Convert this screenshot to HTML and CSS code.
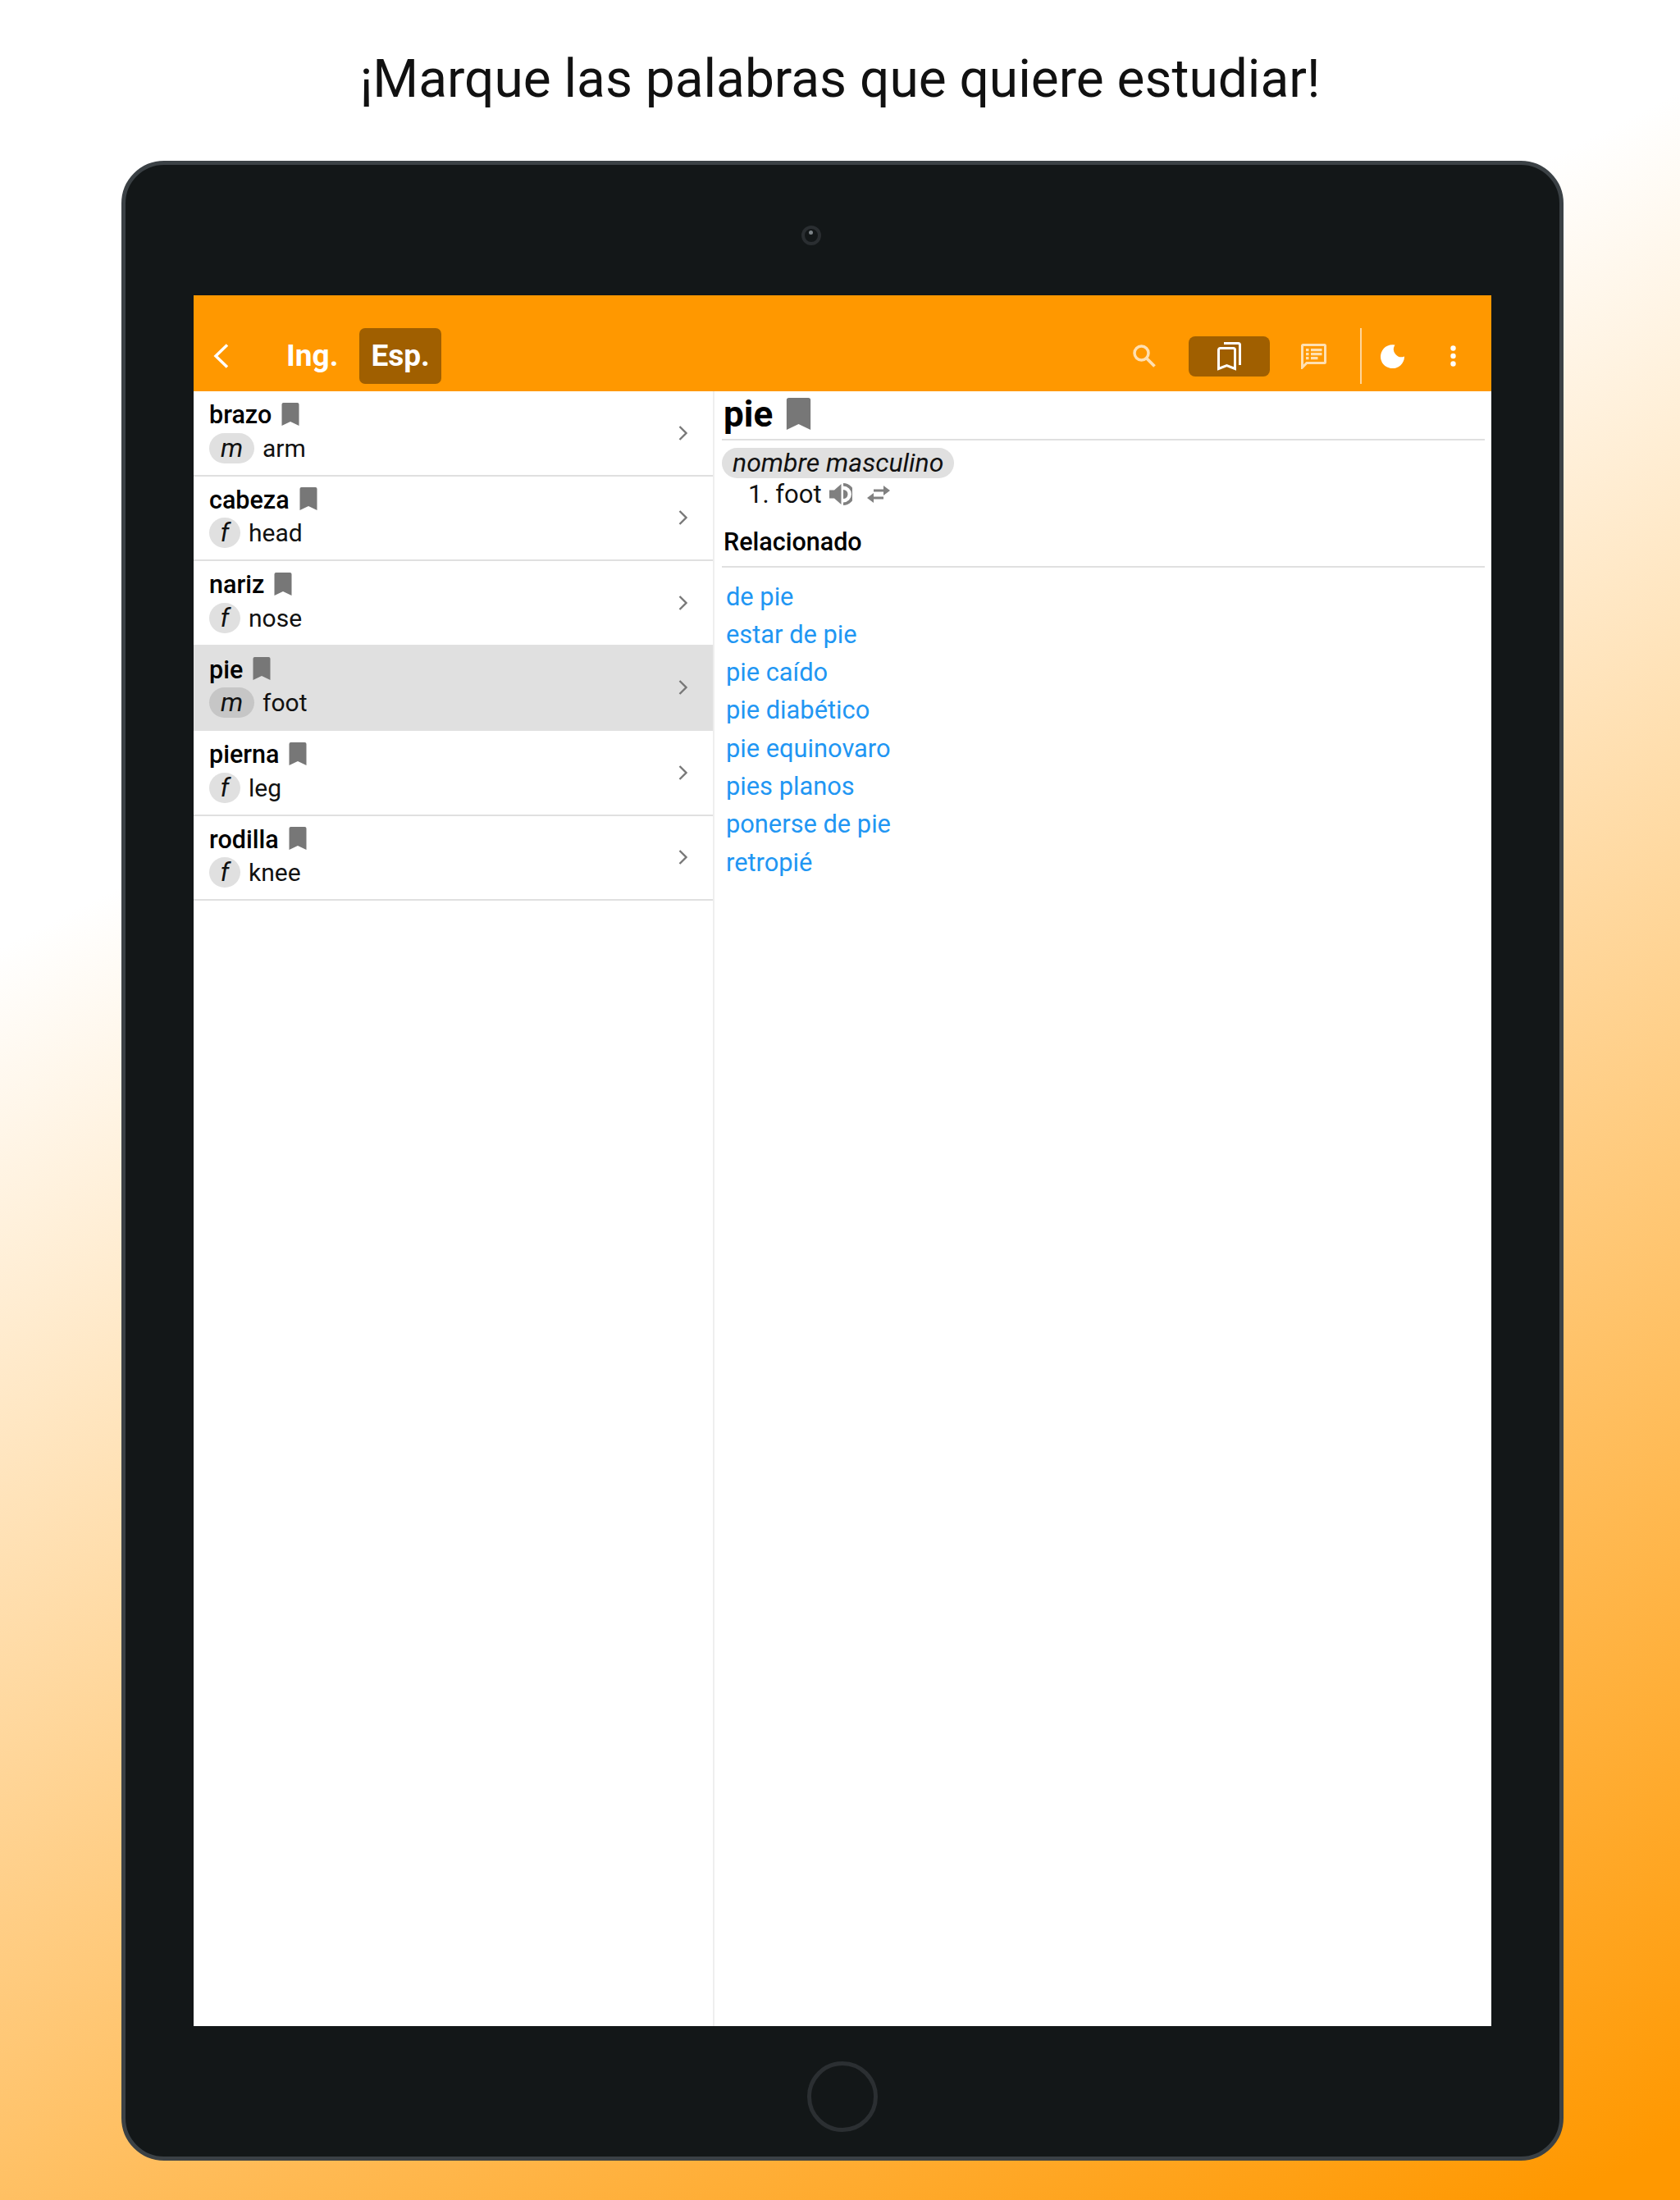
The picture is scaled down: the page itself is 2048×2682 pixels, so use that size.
FILE: index.html
```
<!DOCTYPE html>
<html>
<head>
	<meta charset="utf-8">
	<title>Marque las palabras</title>
	<link rel="stylesheet" href="styles.css">
</head>
<body>
	<h1 class="headline">¡Marque las palabras que quiere estudiar!</h1>

	<div class="tablet">
		<div class="bezel-top"><div class="camera"></div></div>

		<div class="screen">
			<div class="toolbar">
				<svg class="back" viewBox="0 0 19 30"><path d="M17 1.500 3 15l14 13.500" fill="none" stroke="#fff" stroke-width="3.500"/></svg>
				<div class="lang">Ing.</div>
				<div class="lang lang-on">Esp.</div>
				<div class="tools">
					<svg class="ic-search" viewBox="0 0 28 28"><circle cx="10.500" cy="10.500" r="8.500" fill="none" stroke="#ffe0b2" stroke-width="3.500"/><path d="m16.500 16.500 10 10" stroke="#ffe0b2" stroke-width="3.800"/></svg>
					<div class="tool-on">
						<svg class="ic-marks" viewBox="0 0 29 35"><path d="M8 1.500h17.500a2 2 0 0 1 2 2V28" fill="none" stroke="#fff" stroke-width="3"/><path d="M3.500 7.500h16a2 2 0 0 1 2 2v23l-10-4-10 4v-23a2 2 0 0 1 2-2z" fill="none" stroke="#fff" stroke-width="3"/></svg>
					</div>
					<svg class="ic-note" viewBox="0 0 31 31"><path d="M2.500 1.500h26a1 1 0 0 1 1 1v20a1 1 0 0 1-1 1H7l-5.500 5.500V2.500a1 1 0 0 1 1-1z" fill="none" stroke="#ffe0b2" stroke-width="3"/><path d="M6 6h3.500v3.200H6zM12 6h13.500v3.200H12zM6 11h3.500v3.200H6zM12 11h13.500v3.200H12zM6 16h3.500v3.200H6zM12 16h8.500v3.200H12z" fill="#ffe0b2"/></svg>
					<div class="divider"></div>
					<svg class="ic-moon" viewBox="0 0 29 29"><path d="M17.500.5A14.500 14.500 0 1 0 29 14.500 9.500 9.500 0 0 1 17.500.5z" fill="#fff"/></svg>
					<svg class="ic-dots" viewBox="0 0 7 26"><circle cx="3.500" cy="3.500" r="3.200" fill="#fff"/><circle cx="3.500" cy="13" r="3.200" fill="#fff"/><circle cx="3.500" cy="22.500" r="3.200" fill="#fff"/></svg>
				</div>
			</div>

			<div class="panes">
				<div class="list">
					<div class="row">
						<div class="row-main">
							<div class="word">brazo <svg class="mark" viewBox="0 0 21 28"><use href="#bookmark"/></svg></div>
							<div class="trans"><span class="gender gender-m">m</span>arm</div>
						</div>
						<svg class="chev" viewBox="0 0 12 18"><path d="m1.500 1 8 8-8 8" fill="none" stroke="#777" stroke-width="2.400"/></svg>
					</div>
					<div class="row">
						<div class="row-main">
							<div class="word">cabeza <svg class="mark" viewBox="0 0 21 28"><use href="#bookmark"/></svg></div>
							<div class="trans"><span class="gender">f</span>head</div>
						</div>
						<svg class="chev" viewBox="0 0 12 18"><path d="m1.500 1 8 8-8 8" fill="none" stroke="#777" stroke-width="2.400"/></svg>
					</div>
					<div class="row">
						<div class="row-main">
							<div class="word">nariz <svg class="mark" viewBox="0 0 21 28"><use href="#bookmark"/></svg></div>
							<div class="trans"><span class="gender">f</span>nose</div>
						</div>
						<svg class="chev" viewBox="0 0 12 18"><path d="m1.500 1 8 8-8 8" fill="none" stroke="#777" stroke-width="2.400"/></svg>
					</div>
					<div class="row row-on">
						<div class="row-main">
							<div class="word">pie <svg class="mark" viewBox="0 0 21 28"><use href="#bookmark"/></svg></div>
							<div class="trans"><span class="gender gender-m">m</span>foot</div>
						</div>
						<svg class="chev" viewBox="0 0 12 18"><path d="m1.500 1 8 8-8 8" fill="none" stroke="#777" stroke-width="2.400"/></svg>
					</div>
					<div class="row">
						<div class="row-main">
							<div class="word">pierna <svg class="mark" viewBox="0 0 21 28"><use href="#bookmark"/></svg></div>
							<div class="trans"><span class="gender">f</span>leg</div>
						</div>
						<svg class="chev" viewBox="0 0 12 18"><path d="m1.500 1 8 8-8 8" fill="none" stroke="#777" stroke-width="2.400"/></svg>
					</div>
					<div class="row">
						<div class="row-main">
							<div class="word">rodilla <svg class="mark" viewBox="0 0 21 28"><use href="#bookmark"/></svg></div>
							<div class="trans"><span class="gender">f</span>knee</div>
						</div>
						<svg class="chev" viewBox="0 0 12 18"><path d="m1.500 1 8 8-8 8" fill="none" stroke="#777" stroke-width="2.400"/></svg>
					</div>
				</div>

				<div class="entry">
					<div class="entry-head">pie <svg class="mark-big" viewBox="0 0 21 28"><use href="#bookmark"/></svg></div>
					<div class="pos"><span class="pos-pill">nombre masculino</span></div>
					<div class="sense">
						1. foot
						<svg class="ic-sound" viewBox="0 0 28 27"><path d="M0 8.500h6L14.500 1v25L6 18.500H0z" fill="#808080"/><path d="M17 8a5.500 5.500 0 0 1 0 11z" fill="#808080"/><path d="M17 1.800a11.700 11.700 0 0 1 0 23.400" fill="none" stroke="#808080" stroke-width="3.500"/></svg>
						<svg class="ic-swap" viewBox="0 0 28 21"><path d="M8 4.500h12V0l8 6-8 6V7.500H8zM20 13.500H8V9l-8 6 8 6v-4.500h12z" fill="#808080"/></svg>
					</div>
					<div class="related">Relacionado</div>
					<div class="links">
						<a class="link">de pie</a>
						<a class="link">estar de pie</a>
						<a class="link">pie caído</a>
						<a class="link">pie diabético</a>
						<a class="link">pie equinovaro</a>
						<a class="link">pies planos</a>
						<a class="link">ponerse de pie</a>
						<a class="link">retropié</a>
					</div>
				</div>
			</div>
		</div>

		<div class="bezel-bottom"><div class="home"></div></div>
	</div>

	<svg class="defs" width="0" height="0"><defs><path id="bookmark" d="M2 0h17a2 2 0 0 1 2 2v26l-10.500-5L0 28V2a2 2 0 0 1 2-2z" fill="#777"/></defs></svg>
</body>
</html>
```

FILE: styles.css
```
*{
	box-sizing: border-box;
}
html,body{
	margin: 0;
	padding: 0;
}
body{
	width: 2048px;
	height: 2682px;
	overflow: hidden;
	font-family: Roboto,sans-serif;
	color: #000;
	background: linear-gradient(153deg,#fff 31%,#ff9800 98%);
}
.defs{
	display: block;
}
.headline{
	margin: 0;
	height: 196px;
	padding-top: 56px;
	font-size: 64px;
	line-height: 82px;
	font-weight: 400;
	text-align: center;
	color: #111;
}

/* tablet frame */
.tablet{
	width: 1758px;
	height: 2438px;
	margin-left: 148px;
	padding: 0 83px;
	background: #131718;
	border: 5px solid #3b4145;
	border-radius: 52px;
}
.bezel-top{
	height: 159px;
	padding-top: 74px;
}
.camera{
	width: 24px;
	height: 24px;
	margin-left: 741px;
	border: 4px solid #2a2e31;
	border-radius: 50%;
	position: relative;
}
.camera:after{
	content: '';
	position: absolute;
	left: 5px;
	top: 2px;
	width: 5px;
	height: 5px;
	border-radius: 50%;
	background: #7d8488;
}
.bezel-bottom{
	display: flex;
	justify-content: center;
	padding-top: 43px;
}
.home{
	width: 86px;
	height: 86px;
	border: 5px solid #2b2f32;
	border-radius: 50%;
}

/* app screen */
.screen{
	width: 1582px;
	height: 2110px;
	background: #fff;
	display: flex;
	flex-direction: column;
}
.toolbar{
	height: 117px;
	flex: none;
	background: #ff9800;
	display: flex;
	align-items: flex-end;
	padding-bottom: 9px;
	font-weight: 700;
	color: #fff;
}
.back{
	width: 19px;
	height: 30px;
	margin: 0 0 19px 24px;
}
.lang{
	font-size: 37px;
	line-height: 68px;
	padding: 0 14px;
	height: 68px;
	border-radius: 7px;
}
.back + .lang{
	margin-left: 56px;
	margin-right: 12px;
}
.lang-on{
	background: #a05f00;
}
.tools{
	margin-left: auto;
	display: flex;
	align-items: center;
	height: 68px;
}
.ic-search{
	width: 28px;
	height: 28px;
	margin-right: 40px;
}
.tool-on{
	width: 99px;
	height: 49px;
	margin-right: 38px;
	background: #a05f00;
	border-radius: 8px;
	display: flex;
	align-items: center;
	justify-content: center;
}
.ic-marks{
	width: 29px;
	height: 35px;
}
.ic-note{
	width: 31px;
	height: 31px;
	margin-right: 41px;
}
.divider{
	width: 2px;
	height: 68px;
	margin-right: 23px;
	background: rgba(255,255,255,.6);
}
.ic-moon{
	width: 29px;
	height: 29px;
	margin-right: 56px;
}
.ic-dots{
	width: 7px;
	height: 26px;
	margin-right: 43px;
}

.panes{
	flex: 1;
	display: flex;
	min-height: 0;
}

/* word list */
.list{
	width: 635px;
	flex: none;
	border-right: 2px solid #eee;
}
.row{
	height: 103.5px;
	display: flex;
	align-items: center;
	padding-left: 19px;
	border-bottom: 2px solid #e0e0e0;
}
.row-on{
	background: #e0e0e0;
}
.row-main{
	flex: 1;
	padding-bottom: 4px;
}
.word{
	display: flex;
	align-items: center;
	height: 38px;
	font-size: 30.5px;
	font-weight: 500;
	gap: 12px;
}
.mark{
	width: 22px;
	height: 28px;
	margin-top: -2px;
}
.trans{
	display: flex;
	align-items: center;
	height: 37px;
	margin-top: 3px;
	font-size: 30px;
	color: #111;
}
.gender{
	width: 38px;
	height: 37px;
	margin-right: 10px;
	border-radius: 19px;
	background: #e0e0e0;
	font-size: 32px;
	font-style: italic;
	text-align: center;
	line-height: 37px;
}
.gender-m{
	width: 55px;
}
.row-on .gender{
	background: #c6c6c6;
}
.chev{
	width: 12px;
	height: 18px;
	margin-right: 30px;
}

/* entry pane */
.entry{
	flex: 1;
	padding: 0 8px 0 9px;
}
.entry-head{
	height: 60px;
	padding: 0 0 3px 2px;
	border-bottom: 2px solid #e0e0e0;
	display: flex;
	align-items: center;
	gap: 16px;
	font-size: 44px;
	font-weight: 700;
}
.mark-big{
	width: 31px;
	height: 39px;
}
.pos{
	margin-top: 9px;
	height: 37px;
	display: flex;
}
.pos-pill{
	height: 37px;
	padding: 0 13px;
	border-radius: 19px;
	background: #e0e0e0;
	font-size: 32px;
	font-style: italic;
	line-height: 37px;
	color: #111;
}
.sense{
	height: 37px;
	margin-top: 1px;
	padding-left: 32px;
	display: flex;
	align-items: center;
	font-size: 31px;
	color: #111;
	gap: 9px;
}
.ic-sound{
	width: 28px;
	height: 27px;
}
.ic-swap{
	width: 28px;
	height: 21px;
	margin-left: 9px;
}
.related{
	height: 71px;
	padding: 22px 0 0 2px;
	border-bottom: 2px solid #e0e0e0;
	font-size: 30.5px;
	font-weight: 500;
	line-height: 36px;
}
.links{
	padding: 12.5px 0 0 5px;
}
.link{
	display: block;
	height: 46.3px;
	font-size: 30.8px;
	line-height: 46.3px;
	color: #2196f3;
}
```
